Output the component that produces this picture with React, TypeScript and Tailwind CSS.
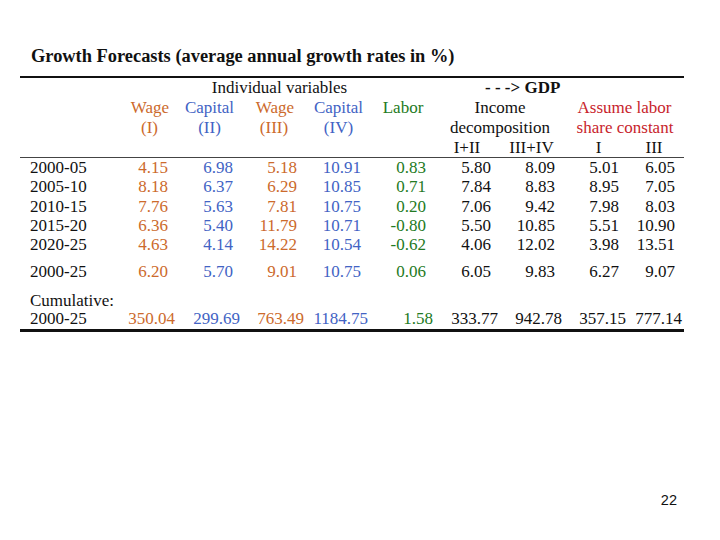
const rows = [
  ['2000-05', '4.15', '6.98', '5.18', '10.91', '0.83', '5.80', '8.09', '5.01', '6.05'],
  ['2005-10', '8.18', '6.37', '6.29', '10.85', '0.71', '7.84', '8.83', '8.95', '7.05'],
  ['2010-15', '7.76', '5.63', '7.81', '10.75', '0.20', '7.06', '9.42', '7.98', '8.03'],
  ['2015-20', '6.36', '5.40', '11.79', '10.71', '-0.80', '5.50', '10.85', '5.51', '10.90'],
  ['2020-25', '4.63', '4.14', '14.22', '10.54', '-0.62', '4.06', '12.02', '3.98', '13.51'],
];

const summary = ['2000-25', '6.20', '5.70', '9.01', '10.75', '0.06', '6.05', '9.83', '6.27', '9.07'];
const cumulative = ['2000-25', '350.04', '299.69', '763.49', '1184.75', '1.58', '333.77', '942.78', '357.15', '777.14'];

// colour per value column
const colColors = [
  'text-[#cc6a2c]',
  'text-[#4263c4]',
  'text-[#cc6a2c]',
  'text-[#4263c4]',
  'text-[#237a23]',
  'text-[#111]',
  'text-[#111]',
  'text-[#111]',
  'text-[#111]',
];

const grid = 'grid grid-cols-[100px_55px_65px_64px_64px_65px_65px_64px_64px_56px]';

function DataRow({ cells, shift, lh }: { cells: string[]; shift: boolean; lh: string }) {
  return (
    <div className={`${grid} ${lh}`}>
      <div className="pl-[10px] text-[#111]">{cells[0]}</div>
      {cells.slice(1).map((c, i) => (
        <div key={i} className={`text-right ${shift ? 'pr-[7px]' : ''} ${colColors[i]}`}>
          {c}
        </div>
      ))}
    </div>
  );
}

export default function App() {
  return (
    <div className="w-[720px] h-[540px] bg-white flex flex-col font-['Liberation_Serif',serif] text-[17px]">
      <h1 className="pl-[31px] pt-[44px] text-[18.4px] font-bold leading-[24px] text-[#111]">
        Growth Forecasts (average annual growth rates in %)
      </h1>

      <div className="ml-[20px] w-[664px] mt-[8px] border-t-2 border-[#111]">
        {/* header */}
        <div className={`${grid} leading-[20px]`}>
          <div></div>
          <div className="col-span-5 text-center pl-[6px] text-[#111]">Individual variables</div>
          <div className="col-span-4 pl-[52px] font-bold text-[#111]">- - -&gt; GDP</div>

          <div></div>
          <div className="text-center pl-[5px] text-[#cc6a2c]">Wage</div>
          <div className="text-center pl-[4px] text-[#4263c4]">Capital</div>
          <div className="text-center pl-[6px] text-[#cc6a2c]">Wage</div>
          <div className="text-center pl-[5px] text-[#4263c4]">Capital</div>
          <div className="text-center pl-[5px] text-[#237a23]">Labor</div>
          <div className="col-span-2 text-center pl-[5px] text-[#111]">Income</div>
          <div className="col-span-2 text-center pl-[5px] text-[#c81e2c]">Assume labor</div>

          <div></div>
          <div className="text-center pl-[4px] text-[#cc6a2c]">(I)</div>
          <div className="text-center pl-[4px] text-[#4263c4]">(II)</div>
          <div className="text-center pl-[4px] text-[#cc6a2c]">(III)</div>
          <div className="text-center pl-[5px] text-[#4263c4]">(IV)</div>
          <div></div>
          <div className="col-span-2 text-center pl-[5px] text-[#111]">decomposition</div>
          <div className="col-span-2 text-center pl-[6px] text-[#c81e2c]">share constant</div>
        </div>
        <div className={`${grid} leading-[19px]`}>
          <div className="col-span-6"></div>
          <div className="text-center pl-[3px] text-[#111]">I+II</div>
          <div className="text-center pl-[3px] text-[#111]">III+IV</div>
          <div className="text-center pl-[9px] text-[#111]">I</div>
          <div className="text-center text-[#111]">III</div>
        </div>

        {/* body */}
        <div className="border-t-[1.5px] border-[#444]">
          {rows.map((r) => (
            <DataRow key={r[0]} cells={r} shift lh="leading-[19.3px]" />
          ))}
          <div className="mt-[8px]">
            <DataRow cells={summary} shift lh="leading-[19.3px]" />
          </div>
          <div className="mt-[9px] pl-[10px] leading-[19px] text-[#111]">Cumulative:</div>
          <DataRow cells={cumulative} shift={false} lh="leading-[17px]" />
        </div>
        <div className="mt-[2px] border-t-[3px] border-[#111]"></div>
      </div>

      <div className="mt-auto mb-[28px] pr-[43px] text-right font-['Liberation_Sans',sans-serif] text-[14.5px] text-[#111]">
        22
      </div>
    </div>
  );
}
